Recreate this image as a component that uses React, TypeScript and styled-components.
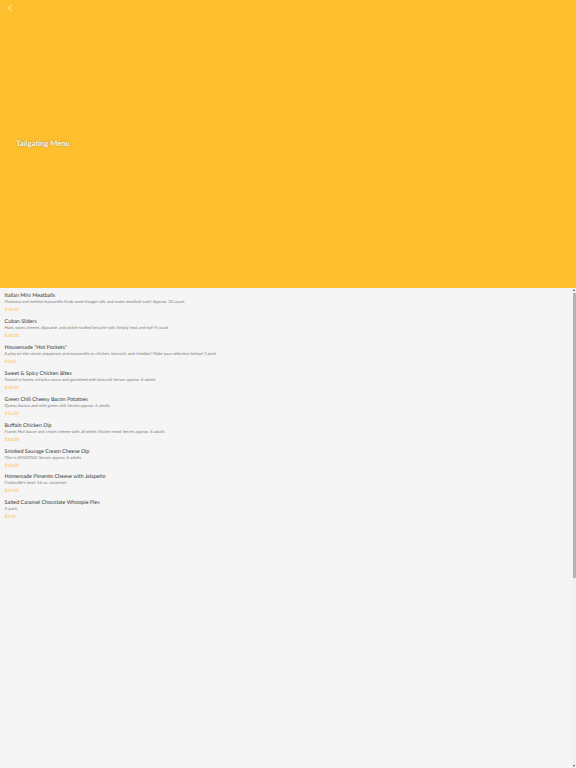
import React from "react";
import styled, { createGlobalStyle } from "styled-components";

const GlobalStyle = createGlobalStyle`
  html, body {
    margin: 0;
    padding: 0;
    height: 100%;
    overflow: hidden;
    background: #f5f5f5;
    font-family: "Lato", "Open Sans", sans-serif;
    text-rendering: geometricPrecision;
  }
`;

const Page = styled.div`
  display: flex;
  flex-direction: column;
  width: 576px;
  height: 768px;
`;

const Hero = styled.header`
  display: flex;
  flex-direction: column;
  height: 288px;
  flex-shrink: 0;
  background: #fdbf2d;
`;

const BackButton = styled.button`
  display: flex;
  align-items: center;
  justify-content: center;
  width: 20px;
  height: 16px;
  padding: 0;
  border: 0;
  background: none;
  color: #fff3c8;
`;

const HeroTitle = styled.div`
  display: flex;
  flex: 1;
  align-items: center;
  padding: 0 0 18px 16px;
`;

const Title = styled.h1`
  margin: 0;
  font-size: 7.6px;
  font-weight: 700;
  color: #fff;
  text-shadow: 0 0 1.5px rgba(90, 60, 0, 0.7);
`;

const Body = styled.div`
  display: flex;
  flex: 1;
  min-height: 0;
`;

const MenuList = styled.ul`
  flex: 1;
  margin: 0;
  padding: 0;
  list-style: none;
`;

const MenuRow = styled.li`
  display: flex;
  flex-direction: column;
  height: 25.9px;
  box-sizing: border-box;
  padding: 5.2px 4.6px 0;
  border-bottom: 1px solid #f3f3f3;
`;

const ItemName = styled.div`
  font-size: 5.4px;
  line-height: 6px;
  color: #3a3a3a;
`;

const ItemDescription = styled.div`
  font-size: 4.2px;
  line-height: 6px;
  color: #808080;
`;

const ItemPrice = styled.div`
  margin-top: 1px;
  font-size: 4.6px;
  line-height: 6px;
  color: #f7bd35;
`;

const Scrollbar = styled.div`
  display: flex;
  flex-direction: column;
  width: 4px;
  background: #f1f1f1;
`;

const ScrollArrow = styled.div<{ $down?: boolean }>`
  width: 0;
  height: 0;
  margin: ${(p) => (p.$down ? "auto 0 1px 0.5px" : "1px 0 0 0.5px")};
  border-left: 1.5px solid transparent;
  border-right: 1.5px solid transparent;
  ${(p) => (p.$down ? "border-top" : "border-bottom")}: 2px solid #505050;
`;

const ScrollThumb = styled.div`
  height: 285px;
  margin: 2px 0 0 0.5px;
  width: 3px;
  background: #b4b4b4;
`;

const items = [
  { name: "Italian Mini Meatballs", description: "Marinara and melted mozzarella Grab some hoagie rolls and make meatball subs! Approx. 30 count", price: "$18.00" },
  { name: "Cuban Sliders", description: "Ham, swiss cheese, dijonaise, and pickle stuffed brioche rolls Simply heat and eat! 9 count", price: "$18.00" },
  { name: 'Housemade "Hot Pockets"', description: "A play on the classic pepperoni and mozzarella or chicken, broccoli, and cheddar! Make your selection below! 2 pack", price: "$9.00" },
  { name: "Sweet & Spicy Chicken Bites", description: "Tossed in honey sriracha sauce and garnished with broccoli Serves approx. 6 adults", price: "$18.00" },
  { name: "Green Chili Cheesy Bacon Potatoes", description: "Queso blanco and mild green chili Serves approx. 6 adults", price: "$15.00" },
  { name: "Buffalo Chicken Dip", description: "Franks Hot Sauce and cream cheese with all white chicken meat Serves approx. 6 adults", price: "$18.00" },
  { name: "Smoked Sausage Cream Cheese Dip", description: "This is AMAZING! Serves approx. 6 adults", price: "$18.00" },
  { name: "Homemade Pimento Cheese with Jalapeño", description: "Clarksville's best! 16 oz. container", price: "$10.00" },
  { name: "Salted Caramel Chocolate Whoopie Pies", description: "4-pack", price: "$9.00" },
];

export default function App() {
  return (
    <Page>
      <GlobalStyle />
      <Hero>
        <BackButton aria-label="Back">
          <svg width="6" height="8" viewBox="0 0 6 8">
            <path d="M4 1.2 L1.6 4 L4 6.8" fill="none" stroke="currentColor" strokeWidth="1" />
          </svg>
        </BackButton>
        <HeroTitle>
          <Title>Tailgating Menu</Title>
        </HeroTitle>
      </Hero>
      <Body>
        <MenuList>
          {items.map((item) => (
            <MenuRow key={item.name}>
              <ItemName>{item.name}</ItemName>
              <ItemDescription>{item.description}</ItemDescription>
              <ItemPrice>{item.price}</ItemPrice>
            </MenuRow>
          ))}
        </MenuList>
        <Scrollbar>
          <ScrollArrow />
          <ScrollThumb />
          <ScrollArrow $down />
        </Scrollbar>
      </Body>
    </Page>
  );
}
